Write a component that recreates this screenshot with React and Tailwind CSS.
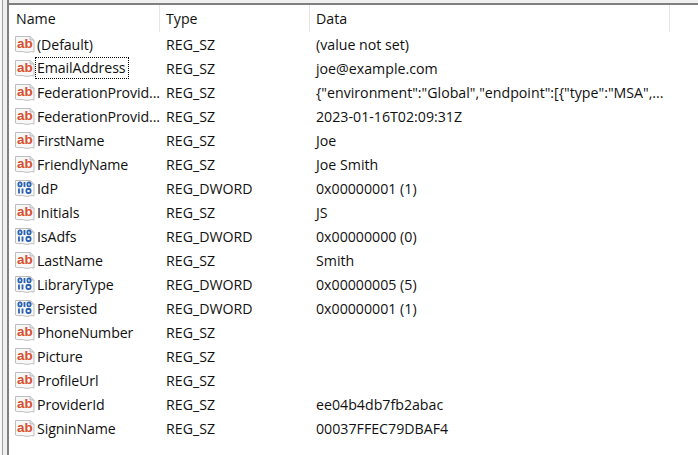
const rows = [
  ['sz', '(Default)', 'REG_SZ', '(value not set)'],
  ['sz', 'EmailAddress', 'REG_SZ', 'joe@example.com'],
  ['sz', 'FederationProvid...', 'REG_SZ', '{"environment":"Global","endpoint":[{"type":"MSA",...'],
  ['sz', 'FederationProvid...', 'REG_SZ', '2023-01-16T02:09:31Z'],
  ['sz', 'FirstName', 'REG_SZ', 'Joe'],
  ['sz', 'FriendlyName', 'REG_SZ', 'Joe Smith'],
  ['bin', 'IdP', 'REG_DWORD', '0x00000001 (1)'],
  ['sz', 'Initials', 'REG_SZ', 'JS'],
  ['bin', 'IsAdfs', 'REG_DWORD', '0x00000000 (0)'],
  ['sz', 'LastName', 'REG_SZ', 'Smith'],
  ['bin', 'LibraryType', 'REG_DWORD', '0x00000005 (5)'],
  ['bin', 'Persisted', 'REG_DWORD', '0x00000001 (1)'],
  ['sz', 'PhoneNumber', 'REG_SZ', ''],
  ['sz', 'Picture', 'REG_SZ', ''],
  ['sz', 'ProfileUrl', 'REG_SZ', ''],
  ['sz', 'ProviderId', 'REG_SZ', 'ee04b4db7fb2abac'],
  ['sz', 'SigninName', 'REG_SZ', '00037FFEC79DBAF4'],
];

// registry value icon: folded page with a wavy bottom edge
function ValueIcon({ type }) {
  return (
    <svg width="20" height="20" viewBox="0 0 20 20" className="shrink-0">
      <path d="M0.5 2.5H15L19 6V18C16 16.5 13 19.5 9.5 18C6.5 16.8 3.5 18.5 0.5 17Z" fill="#f7f7f7" stroke="#bdbdbd" />
      <path d="M15 2.5V6H19" fill="#e0e0e0" stroke="#bdbdbd" />
      {type === 'sz' ? (
        <text x="2" y="14" fontSize="13.5" fontWeight="700" fill="#d8502f" fontFamily="Liberation Sans, sans-serif">ab</text>
      ) : (
        <g fill="none" stroke="#2a62b4" strokeWidth="1.8">
          <rect x="3.4" y="4.4" width="3.2" height="4" rx="1.4" />
          <path d="M9.5 4V9" />
          <rect x="12.4" y="4.4" width="3.2" height="4" rx="1.4" />
          <path d="M4 10.5V15.5M7.5 10.5V15.5" />
          <rect x="11.4" y="11" width="4.2" height="4" rx="1.4" />
        </g>
      )}
    </svg>
  );
}

export default function App() {
  return (
    <div className="w-[698px] h-[455px] overflow-hidden bg-white flex text-[14.2px] text-[#111] font-['Open_Sans',sans-serif]">
      {/* splitter strip on the left */}
      <div className="flex shrink-0">
        <div className="w-[2px] bg-[#f8f8f8]"></div>
        <div className="w-[1px] bg-[#a0a0a0]"></div>
        <div className="w-[4px] bg-[#f0f0f0]"></div>
        <div className="w-[2px] bg-[#808080]"></div>
      </div>
      <div className="flex-1 min-w-0 flex flex-col">
        <div className="h-[5px] shrink-0 bg-[#808080] border-t-[3px] border-[#f0f0f0]"></div>
        <div className="flex h-[27px] items-center shrink-0">
          <div className="w-[151px] pl-[7px] pt-[1px] h-full flex items-center border-r border-[#e5e5e5]">Name</div>
          <div className="w-[150px] pl-[6px] pt-[1px] h-full flex items-center border-r border-[#e5e5e5]">Type</div>
          <div className="w-[360px] pl-[6px] pt-[1px] h-full flex items-center border-r border-[#e5e5e5]">Data</div>
        </div>
        <div className="flex flex-col">
          {rows.map((r, i) => (
            <div key={i} className="flex h-[24px] items-center">
              <div className="w-[151px] pl-[6px] flex items-center">
                <ValueIcon type={r[0]} />
                <span className={i === 1 ? 'pl-[1px] pr-[3px] border border-dotted border-black leading-[20px] h-[22px] whitespace-nowrap tracking-[-0.1px]' : 'pl-[2px] pt-[1px] whitespace-nowrap tracking-[-0.1px]'}>{r[1]}</span>
              </div>
              <div className="w-[150px] pl-[6px] pt-[1px] whitespace-nowrap">{r[2]}</div>
              <div className="pl-[6px] pt-[1px] whitespace-nowrap">{r[3]}</div>
            </div>
          ))}
        </div>
      </div>
    </div>
  );
}
